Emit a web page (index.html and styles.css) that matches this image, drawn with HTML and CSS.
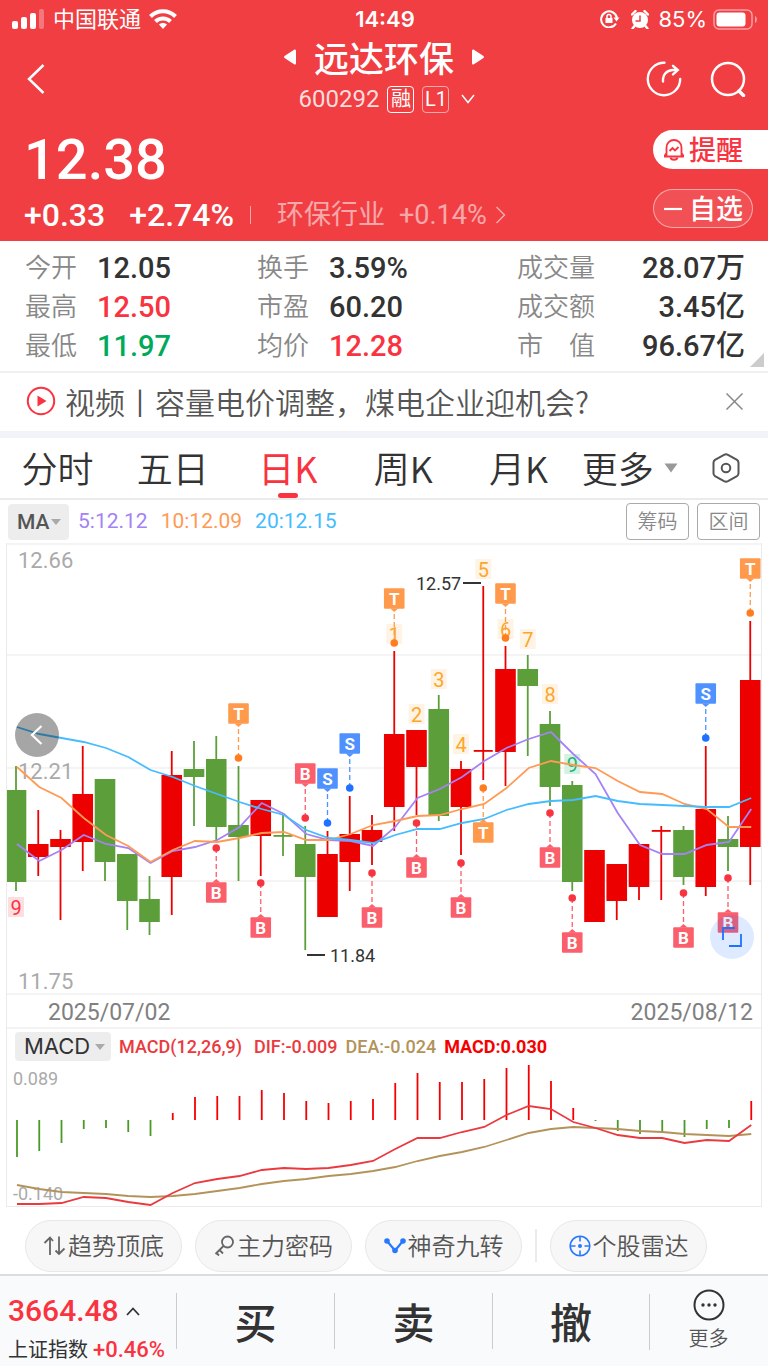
FILE: index.html
```
<!DOCTYPE html>
<html lang="zh">
<head>
    <meta charset="UTF-8">
    <meta name="viewport" content="width=device-width, initial-scale=1.0">
    <title>远达环保 600292</title>
    <link rel="stylesheet" href="styles.css">
</head>
<body>
    <header class="top">
        <div class="status">
            <div class="status-left">
                <svg width="33" height="20" viewBox="0 0 33 20" fill="#fff">
                    <rect x="0" y="12" width="6" height="8" rx="2"/>
                    <rect x="9" y="8" width="6" height="12" rx="2"/>
                    <rect x="18" y="4" width="6" height="16" rx="2"/>
                    <rect x="27" y="0" width="5" height="20" rx="2" opacity="0.3"/>
                </svg>
                <span>中国联通</span>
                <svg width="28" height="20" viewBox="0 0 28 20" fill="none" stroke="#fff" stroke-width="4">
                    <path d="M1.5 7.5C8.500 0.500 19.500 0.500 26.500 7.500"/>
                    <path d="M6.500 12.500C10.500 8.500 17.500 8.500 21.500 12.500"/>
                    <path d="M14 20l-4-4.500c2.200-2 5.800-2 8 0z" fill="#fff" stroke="none"/>
                </svg>
            </div>
            <span class="status-time">14:49</span>
            <div class="status-right">
                <svg width="20" height="18" viewBox="0 0 20 18" fill="none" stroke="#fff" stroke-width="2">
                    <path d="M16 13.500A8 8 0 1 1 17 8"/>
                    <path d="M13.500 7.500h6l-3 4z" fill="#fff" stroke="none"/>
                    <rect x="5.500" y="8" width="7" height="5" fill="#fff" stroke="none"/>
                    <path d="M7 8V6.500a2 2 0 0 1 4 0V8" stroke-width="1.500"/>
                </svg>
                <svg class="alarm" width="18" height="19" viewBox="0 0 18 19">
                    <circle cx="9" cy="10" r="8" fill="#fff"/>
                    <path d="M1 4.500L4.500 1M17 4.500L13.500 1M3.500 16l-2 2.500M14.500 16l2 2.500" stroke="#fff" stroke-width="2.400" stroke-linecap="round"/>
                    <path d="M9 5.500V11H4.500" fill="none" stroke="#f03e42" stroke-width="1.500"/>
                </svg>
                <span>85%</span>
                <svg width="45" height="21" viewBox="0 0 45 21" fill="none">
                    <rect x="1" y="1" width="38" height="19" rx="5" stroke="#fff" stroke-width="1.500" opacity="0.5"/>
                    <rect x="3.500" y="3.500" width="29" height="14" rx="3" fill="#fff"/>
                    <path d="M42 7c2.500 1 2.500 6 0 7z" fill="#fff" opacity="0.5"/>
                </svg>
            </div>
        </div>

        <nav class="nav">
            <button class="icon-btn back" aria-label="返回">
                <svg width="18" height="32" viewBox="0 0 18 32" fill="none" stroke="#fff" stroke-width="2.500">
                    <path d="M16.500 2L2 16l14.500 14"/>
                </svg>
            </button>
            <div class="stock">
                <div class="stock-name">
                    <button class="icon-btn" aria-label="上一只">
                        <svg width="12" height="16" viewBox="0 0 12 16" fill="#fff"><path d="M10.500 0.500Q12 0 12 2v12q0 2-1.500 1.500L0.500 9Q-0.300 8 0.500 7z"/></svg>
                    </button>
                    <h1>远达环保</h1>
                    <button class="icon-btn" aria-label="下一只">
                        <svg width="12" height="16" viewBox="0 0 12 16" fill="#fff"><path d="M1.500 0.500Q0 0 0 2v12q0 2 1.500 1.500L11.500 9q0.800-1 0-2z"/></svg>
                    </button>
                </div>
                <div class="stock-code">
                    <span>600292</span>
                    <span class="tag">融</span>
                    <span class="tag tag-dim">L1</span>
                    <svg width="14" height="10" viewBox="0 0 14 10" fill="none" stroke="#fff" stroke-width="1.500"><path d="M1 1l6 7.500L13 1"/></svg>
                </div>
            </div>
            <div class="nav-icons">
                <button class="icon-btn" aria-label="分享">
                    <svg width="36" height="36" viewBox="0 0 36 36" fill="none" stroke="#fff" stroke-width="2.400" stroke-linecap="round">
                        <path d="M18.500 1.800A16.200 16.200 0 1 0 34.200 18"/>
                        <path d="M17 20.500c-0.500-7 4-11.500 10-11.500h3.500"/>
                        <path d="M27 4.800l4.800 4.300-4.800 4.300"/>
                    </svg>
                </button>
                <button class="icon-btn" aria-label="搜索">
                    <svg width="36" height="36" viewBox="0 0 36 36" fill="none" stroke="#fff" stroke-width="2.500" stroke-linecap="round">
                        <circle cx="18" cy="18" r="16"/>
                        <path d="M29 30l4.500 4.500" stroke-width="3.500"/>
                    </svg>
                </button>
            </div>
        </nav>

        <div class="quote">
            <div class="quote-left">
                <div class="price">12.38</div>
                <div class="change">
                    <span>+0.33</span>
                    <span>+2.74%</span>
                    <a href="#" class="industry">
                        <span>环保行业</span>
                        <span>+0.14%</span>
                        <svg width="11" height="18" viewBox="0 0 11 18" fill="none" stroke="#fff" stroke-width="1.500"><path d="M1.500 1L9.500 9l-8 8"/></svg>
                    </a>
                </div>
            </div>
            <div class="quote-actions">
                <button class="alert-btn">
                    <svg width="22" height="24" viewBox="0 0 22 24" fill="none" stroke="#f9333f" stroke-width="1.800">
                        <path d="M1 18.500h20M3.500 18.500V9.500a7.500 7.500 0 0 1 15 0v9M1.500 18l2-3M20.500 18l-2-3"/>
                        <path d="M7.500 19.500c0.500 3 6.500 3 7 0"/>
                        <path d="M6.500 13l3-3 2.500 2.500 3.500-3.500"/>
                    </svg>
                    <span>提醒</span>
                </button>
                <button class="fav-btn">
                    <svg width="18" height="4" viewBox="0 0 18 4"><path d="M0 2h18" stroke="#fff" stroke-width="2.200"/></svg>
                    <span>自选</span>
                </button>
            </div>
        </div>
    </header>

    <section class="stats">
        <dl>
            <div><dt>今开</dt><dd>12.05</dd></div>
            <div><dt>最高</dt><dd class="up">12.50</dd></div>
            <div><dt>最低</dt><dd class="down">11.97</dd></div>
        </dl>
        <dl>
            <div><dt>换手</dt><dd>3.59%</dd></div>
            <div><dt>市盈</dt><dd>60.20</dd></div>
            <div><dt>均价</dt><dd class="up">12.28</dd></div>
        </dl>
        <dl class="wide">
            <div><dt>成交量</dt><dd>28.07万</dd></div>
            <div><dt>成交额</dt><dd>3.45亿</dd></div>
            <div><dt>市　值</dt><dd>96.67亿</dd></div>
        </dl>
    </section>

    <section class="news">
        <a href="#">
            <svg width="30" height="30" viewBox="0 0 30 30"><circle cx="15" cy="15" r="13.200" fill="none" stroke="#f9333f" stroke-width="2"/><path d="M11.500 9.500v11l9-5.500z" fill="#f9333f"/></svg>
            <span>视频丨容量电价调整，煤电企业迎机会?</span>
        </a>
        <button class="icon-btn" aria-label="关闭">
            <svg width="17" height="17" viewBox="0 0 17 17" stroke="#888" stroke-width="1.500"><path d="M0.500 0.500l16 16M16.500 0.500l-16 16"/></svg>
        </button>
    </section>

    <nav class="tabs">
        <button>分时</button>
        <button>五日</button>
        <button class="active">日K</button>
        <button>周K</button>
        <button>月K</button>
        <button>更多<svg width="14" height="10" viewBox="0 0 14 10"><path d="M0.500 0.500h13L7 9.500z" fill="#999"/></svg></button>
        <button aria-label="设置">
            <svg width="28" height="30" viewBox="0 0 28 30" fill="none" stroke="#555" stroke-width="2">
                <path d="M12 1.800q2-1 4 0l9 5q1.500 1 1.500 3v10.400q0 2-1.500 3l-9 5q-2 1-4 0l-9-5q-1.500-1-1.500-3V9.800q0-2 1.500-3z"/>
                <circle cx="14" cy="15" r="4.300"/>
            </svg>
        </button>
    </nav>

    <div class="ma-bar">
        <label class="picker picker-ma">
            <select aria-label="主图指标">
                <option>MA</option>
                <option>BOLL</option>
            </select>
            <svg width="10" height="6" viewBox="0 0 10 6"><path d="M0 0h10L5 6z" fill="#aaa"/></svg>
        </label>
        <span class="ma5">5:12.12</span>
        <span class="ma10">10:12.09</span>
        <span class="ma20">20:12.15</span>
        <div class="ma-actions">
            <button>筹码</button>
            <button>区间</button>
        </div>
    </div>

    <main class="charts">
        <div class="kline">
            <svg id="kline" viewBox="7 0 754 452" role="img" aria-label="日K线"></svg>
            <button class="round prev" aria-label="更早">
                <svg width="14" height="20" viewBox="0 0 14 20" fill="none" stroke="#fff" stroke-width="2.200"><path d="M11.500 1L2 10l9.500 9"/></svg>
            </button>
            <button class="round full" aria-label="全屏">
                <svg width="20" height="20" viewBox="0 0 20 20" fill="none" stroke="#1f72ff" stroke-width="1.800"><path d="M1 13V1h12M7 19h12V7"/></svg>
            </button>
        </div>
        <div class="dates">
            <time datetime="2025-07-02">2025/07/02</time>
            <time datetime="2025-08-12">2025/08/12</time>
        </div>
        <div class="macd-bar">
            <label class="picker picker-macd">
                <select aria-label="副图指标">
                    <option>MACD</option>
                    <option>KDJ</option>
                </select>
                <svg width="10" height="6" viewBox="0 0 10 6"><path d="M0 0h10L5 6z" fill="#aaa"/></svg>
            </label>
            <span class="dif name">MACD(12,26,9)</span>
            <span class="dif">DIF:-0.009</span>
            <span class="dea">DEA:-0.024</span>
            <span class="hist">MACD:0.030</span>
        </div>
        <svg id="macd" viewBox="7 0 754 144" role="img" aria-label="MACD"></svg>
    </main>

    <div class="tools">
        <button>
            <svg width="23" height="22" viewBox="0 0 23 22" fill="none" stroke="#666" stroke-width="1.800"><path d="M7 20V2.500M1.500 8L7 2.500 10 6M16 1.500V19M12.500 15.500L16 19l5.500-5.500"/></svg>
            <span>趋势顶底</span>
        </button>
        <button>
            <svg width="21" height="22" viewBox="0 0 21 22" fill="none" stroke="#666" stroke-width="1.800"><circle cx="13.500" cy="7" r="5.500"/><path d="M9.500 11L1.500 19M5.500 15l3.500 3.500M2.500 18l2.500 2.500"/></svg>
            <span>主力密码</span>
        </button>
        <button>
            <svg width="22" height="22" viewBox="0 0 22 22"><path d="M3 6l8 9.500L19 6" fill="none" stroke="#2878ff" stroke-width="2.200"/><g fill="#2878ff"><circle cx="3" cy="6" r="2.800"/><circle cx="11" cy="15.500" r="2.800"/><circle cx="19" cy="6" r="2.800"/></g></svg>
            <span>神奇九转</span>
        </button>
        <i class="tools-line"></i>
        <button>
            <svg width="22" height="22" viewBox="0 0 22 22" fill="none" stroke="#2878ff" stroke-width="1.600"><circle cx="11" cy="11" r="9.800"/><path d="M11 1v5.500M11 15.500V21M1 11h5.500M15.500 11H21"/><circle cx="11" cy="11" r="2" fill="#2878ff" stroke="none"/></svg>
            <span>个股雷达</span>
        </button>
    </div>

    <footer class="bottom">
        <a href="#" class="index">
            <span class="index-value">3664.48
                <svg width="14" height="9" viewBox="0 0 14 9" fill="none" stroke="#333" stroke-width="1.800"><path d="M1 8l6-6.500L13 8"/></svg>
            </span>
            <span class="index-name">上证指数 <b>+0.46%</b></span>
        </a>
        <button class="trade">买</button>
        <button class="trade">卖</button>
        <button class="trade">撤</button>
        <button class="more">
            <svg width="32" height="32" viewBox="0 0 32 32"><circle cx="16" cy="16" r="14.500" fill="none" stroke="#333" stroke-width="2"/><g fill="#333"><circle cx="10" cy="16" r="1.700"/><circle cx="16" cy="16" r="1.700"/><circle cx="22" cy="16" r="1.700"/></g></svg>
            <span>更多</span>
        </button>
    </footer>

    <script>
        const NS = 'http://www.w3.org/2000/svg';
        const RED = '#ec0000';
        const GREEN = '#5c9f3a';
        const STEP = 22.25;

        // [涨=1 跌=0, 最高, 实体上沿, 实体下沿, 最低]
        const candles = [
            [0, 223, 247, 339, 348], [1, 267, 301, 314, 333], [1, 287, 296, 304, 377], [1, 203, 251, 299, 328],
            [0, 236, 236, 319, 338], [0, 311, 311, 358, 387], [0, 333, 356, 379, 392], [1, 208, 232, 334, 372],
            [0, 198, 226, 234, 283], [0, 193, 216, 284, 298], [0, 223, 282, 294, 338], [1, 257, 257, 293, 333],
            [0, 272, 292, 293, 313], [0, 283, 301, 334, 407], [1, 288, 311, 374, 374], [1, 253, 291, 319, 348],
            [1, 272, 287, 299, 322], [1, 108, 191, 264, 288], [1, 187, 187, 224, 272], [0, 152, 166, 273, 278],
            [1, 218, 226, 264, 312], [1, 43, 207, 208, 237], [1, 103, 126, 209, 243], [0, 112, 126, 143, 213],
            [0, 168, 181, 244, 263], [0, 238, 242, 339, 348], [1, 307, 307, 379, 379], [1, 321, 321, 358, 377],
            [1, 301, 301, 344, 357], [1, 283, 287, 288, 357], [0, 283, 287, 334, 342], [1, 203, 266, 344, 353],
            [0, 273, 296, 304, 328], [1, 78, 137, 304, 342]
        ];
        const ma5 = [301, 318, 307, 292, 301, 305, 320, 308, 304, 297, 284, 260, 271, 291, 297, 298, 303, 284, 255, 246, 234, 218, 205, 196, 189, 211, 231, 270, 302, 311, 311, 302, 299, 266];
        const ma10 = [224, 244, 255, 275, 292, 303, 319, 307, 298, 299, 295, 290, 289, 297, 297, 291, 282, 278, 273, 272, 266, 261, 245, 225, 218, 222, 225, 238, 249, 251, 261, 266, 284, 284];
        const ma20 = [184, 191, 195, 199, 205, 214, 227, 234, 243, 251, 259, 266, 272, 287, 295, 297, 300, 292, 286, 286, 280, 276, 267, 261, 258, 257, 253, 258, 261, 262, 263, 264, 264, 255];

        // [第几根, 字母, 方向(-1上 1下), 圆点位置]
        const signals = [
            [9, 'B', 1, 305], [10, 'T', -1, 215], [11, 'B', 1, 340], [13, 'B', -1, 275], [14, 'S', -1, 280],
            [15, 'S', -1, 245], [16, 'B', 1, 330], [17, 'T', -1, 100], [18, 'B', 1, 280], [20, 'B', 1, 320],
            [21, 'T', 1, 245], [22, 'T', -1, 95], [24, 'B', 1, 270], [25, 'B', 1, 355], [30, 'B', 1, 350],
            [31, 'S', -1, 195], [32, 'B', 1, 335], [33, 'T', -1, 70]
        ];
        const signalColors = {
            B: ['#fb5f6b', '#f9333f'],
            T: ['#ff9a4d', '#ff7d1f'],
            S: ['#4f92ff', '#1f72ff']
        };

        // 神奇九转 [第几根, 数字, 中心, 文字色, 底色]
        const counts = [
            [0, 9, 364, '#f9333f', '#fddfe1'], [17, 1, 91, '#fba828', '#fff3e6'], [18, 2, 171, '#fba828', '#fff3e6'],
            [19, 3, 136, '#fba828', '#fff3e6'], [20, 4, 201, '#fba828', '#fff3e6'], [21, 5, 26, '#fba828', '#fff3e6'],
            [22, 6, 86, '#fba828', '#fff3e6'], [23, 7, 96, '#fba828', '#fff3e6'], [24, 8, 151, '#fba828', '#fff3e6'],
            [25, 9, 221, '#1fb573', '#d5f1e4']
        ];

        const hist = [95, 89, 81, 67, 66, 70, 74, 51, 35, 34, 34, 28, 31, 39, 41, 39, 37, 21, 11, 20, 20, 17, 6, 3, 19, 46, 59, 69, 72, 70, 75, 67, 66, 39];
        const dif = [142, 142, 141, 135, 136, 140, 143, 131, 121, 117, 114, 108, 106, 107, 106, 103, 99, 87, 76, 76, 70, 65, 53, 44, 47, 60, 66, 73, 76, 76, 81, 78, 79, 63];
        const dea = [123, 127, 130, 131, 132, 134, 135, 134, 132, 129, 126, 122, 119, 117, 114, 112, 109, 105, 99, 94, 90, 85, 78, 71, 67, 65, 66, 67, 69, 70, 72, 73, 74, 72];

        function add(svg, tag, attrs, text) {
            const el = document.createElementNS(NS, tag);
            for (const key in attrs) {
                el.setAttribute(key, attrs[key]);
            }
            if (text !== undefined) {
                el.textContent = text;
            }
            svg.appendChild(el);
            return el;
        }

        function drawLine(svg, values, color) {
            const points = values.map((y, i) => (17 + i * STEP) + ',' + y).join(' ');
            add(svg, 'polyline', { points: points, fill: 'none', stroke: color, 'stroke-width': 1.8 });
        }

        function drawKline() {
            const svg = document.getElementById('kline');
            [1, 112, 225, 338, 451].forEach(y => {
                add(svg, 'path', { d: 'M7 ' + y + 'H761', stroke: '#f0f0f0', 'stroke-width': 1.5 });
            });
            add(svg, 'text', { x: 18, y: 25, class: 'axis' }, '12.66');
            add(svg, 'text', { x: 18, y: 236, class: 'axis' }, '12.21');
            add(svg, 'text', { x: 18, y: 446, class: 'axis' }, '11.75');

            counts.forEach(([i, n, y, color, bg]) => {
                const x = 16 + i * STEP;
                add(svg, 'rect', { x: x - 8, y: y - 10, width: 16, height: 20, fill: bg });
                add(svg, 'text', { x: x, y: y + 8, fill: color, class: 'count' }, n);
            });

            candles.forEach(([up, high, top, bottom, low], i) => {
                const x = 16 + i * STEP;
                const color = up ? RED : GREEN;
                const half = bottom - top < 2 ? 9.5 : 10.3;
                add(svg, 'path', { d: 'M' + x + ' ' + high + 'V' + low, stroke: color, 'stroke-width': 1.8 });
                add(svg, 'rect', { x: x - half, y: top, width: half * 2, height: Math.max(bottom - top, 1.8), fill: color });
            });

            drawLine(svg, ma5, '#a582f5');
            drawLine(svg, ma10, '#ff9a55');
            drawLine(svg, ma20, '#45bcff');

            signals.forEach(([i, letter, dir, y]) => {
                const x = 16 + i * STEP;
                const [fill, dot] = signalColors[letter];
                const c = y + dir * 44.5;
                const edge = c - dir * 10;
                add(svg, 'path', { d: 'M' + x + ' ' + y + 'V' + edge, stroke: fill, 'stroke-width': 1.3, 'stroke-dasharray': '5 3' });
                add(svg, 'circle', { cx: x, cy: y, r: 3.8, fill: dot });
                add(svg, 'rect', { x: x - 10.3, y: c - 10.3, width: 20.6, height: 20.6, rx: 1, fill: fill });
                add(svg, 'path', { d: 'M' + (x - 4) + ' ' + edge + 'h8l-4 ' + (-dir * 3.5) + 'z', fill: fill });
                add(svg, 'text', { x: x, y: c + 6, class: 'signal' }, letter);
            });

            add(svg, 'path', { d: 'M463 40h18M307 412h18', stroke: '#333', 'stroke-width': 2 });
            add(svg, 'text', { x: 416, y: 47, class: 'extreme' }, '12.57');
            add(svg, 'text', { x: 330, y: 419, class: 'extreme' }, '11.84');
        }

        function drawMacd() {
            const svg = document.getElementById('macd');
            const zero = 58;
            add(svg, 'text', { x: 13, y: 23, class: 'axis-small' }, '0.089');
            add(svg, 'text', { x: 13, y: 138, class: 'axis-small' }, '-0.140');
            hist.forEach((y, i) => {
                const x = 17 + i * STEP;
                add(svg, 'path', { d: 'M' + x + ' ' + zero + 'V' + y, stroke: y < zero ? '#f50000' : '#4a9a28', 'stroke-width': 1.8 });
            });
            drawLine(svg, dea, '#b3935a');
            drawLine(svg, dif, '#ea3a40');
        }

        drawKline();
        drawMacd();
    </script>
</body>
</html>
```
FILE: styles.css
```
* {
    box-sizing: border-box;
}

body {
    margin: 0;
    background: #fff;
    color: #333;
    font-family: Roboto, "Noto Sans CJK SC", sans-serif;
    line-height: 1.2;
}

button {
    padding: 0;
    border: none;
    background: none;
    color: inherit;
    font: inherit;
    cursor: pointer;
}

a {
    color: inherit;
    text-decoration: none;
}

svg {
    display: block;
    flex: none;
}

/* 以中文为主的文字 */
h1,
.quote-actions,
.news,
.tabs,
.tools,
.trade {
    font-family: "Noto Sans CJK SC", sans-serif;
}

.icon-btn {
    display: flex;
}

/* 顶部 */
.top {
    background: #f03e42;
    color: #fff;
}

.status {
    display: grid;
    grid-template-columns: 1fr auto 1fr;
    align-items: center;
    height: 36px;
    padding: 2px 10px 0 12px;
    font-family: Inter, "Noto Sans CJK SC", sans-serif;
    font-size: 22px;
    line-height: 30px;
}

.status-left,
.status-right {
    display: flex;
    align-items: center;
    gap: 8px;
}

.status-right {
    justify-content: flex-end;
    gap: 6px;
}

.alarm {
    margin: 0 3px 0 5px;
}

.status-time {
    font-weight: 600;
}

.nav {
    display: grid;
    grid-template-columns: 1fr auto 1fr;
    align-items: center;
    height: 86px;
    padding: 0 22px;
}

.back {
    padding-left: 5px;
}

.stock {
    align-self: start;
}

.stock-name {
    display: flex;
    align-items: center;
    justify-content: center;
    gap: 18px;
    height: 42px;
}

.stock-name h1 {
    margin: 0;
    font-size: 35px;
    font-weight: 500;
    line-height: 42px;
}

.stock-code {
    display: flex;
    align-items: center;
    justify-content: center;
    gap: 8px;
    height: 30px;
    margin-top: 6px;
    padding-left: 6px;
    font-size: 24px;
    color: #fddcdd;
}

.tag {
    width: 27px;
    height: 27px;
    border: 1px solid #fff;
    border-radius: 4px;
    font-size: 20px;
    line-height: 25px;
    text-align: center;
    color: #fff;
}

.tag-dim {
    border-color: #f9a9ab;
}

.stock-code svg {
    margin-left: 4px;
}

.nav-icons {
    display: flex;
    justify-content: flex-end;
    gap: 28px;
}

.quote {
    display: flex;
    justify-content: space-between;
    padding: 8px 0 13px 24px;
}

.price {
    font-size: 56px;
    font-weight: 500;
    line-height: 60px;
}

.change {
    display: flex;
    align-items: center;
    gap: 24px;
    height: 26px;
    margin-top: 12px;
    font-size: 32px;
    font-weight: 500;
    white-space: nowrap;
}

.industry {
    display: flex;
    align-items: center;
    gap: 14px;
    font-size: 27px;
    font-weight: 400;
    opacity: 0.55;
}

.industry::before {
    content: "";
    width: 1px;
    height: 18px;
    margin: 0 12px 0 -8px;
    background: #fff;
}

.industry svg {
    margin-left: -6px;
}

.quote-actions {
    display: flex;
    flex-direction: column;
    gap: 20px;
    width: 115px;
}

.alert-btn,
.fav-btn {
    display: flex;
    align-items: center;
    height: 39px;
    font-size: 27px;
    font-weight: 500;
}

.alert-btn {
    gap: 4px;
    padding-left: 10px;
    border-radius: 20px 0 0 20px;
    background: #fff;
    color: #f9333f;
}

.fav-btn {
    gap: 7px;
    width: 100px;
    padding-left: 10px;
    border: 1px solid rgba(255, 255, 255, 0.5);
    border-radius: 20px;
    background: rgba(255, 255, 255, 0.1);
}

/* 行情数据 */
.stats {
    position: relative;
    display: grid;
    grid-template-columns: 232fr 260fr 228fr;
    padding: 8px 23px 5px 25px;
    border-bottom: 2px solid #f0f0f0;
}

.stats::after {
    content: "";
    position: absolute;
    right: 4px;
    bottom: 4px;
    border-left: 14px solid transparent;
    border-bottom: 14px solid #ccc;
}

.stats dl {
    margin: 0;
}

.stats dl div {
    display: flex;
    align-items: center;
    gap: 20px;
    height: 39px;
}

.stats .wide div {
    justify-content: space-between;
}

.stats dt {
    font-size: 26px;
    font-weight: 350;
    color: #888;
}

.stats dd {
    margin: 0;
    font-size: 29px;
    font-weight: 500;
}

.stats .up {
    color: #f9333f;
}

.stats .down {
    color: #00aa5b;
}

.news {
    display: flex;
    align-items: center;
    justify-content: space-between;
    height: 58px;
    padding: 0 25px 2px 26px;
}

.news a {
    display: flex;
    align-items: center;
    gap: 9px;
    font-size: 30px;
    font-weight: 350;
    color: #555;
    white-space: nowrap;
}

.tabs {
    display: grid;
    grid-template-columns: repeat(5, 15fr) 14fr 11fr;
    height: 69px;
    border-top: 7px solid #f1f3f8;
    border-bottom: 2px solid #ebebeb;
}

.tabs button {
    position: relative;
    display: flex;
    align-items: center;
    justify-content: center;
    gap: 10px;
    font-size: 36px;
    white-space: nowrap;
    font-weight: 350;
}

.tabs .active {
    color: #f9333f;
    font-weight: 400;
}

.tabs .active::after {
    content: "";
    position: absolute;
    bottom: 0;
    left: 50%;
    width: 20px;
    height: 5px;
    margin-left: -10px;
    border-radius: 3px;
    background: #f9333f;
}

/* 指标选择 */
.picker {
    position: relative;
    display: block;
}

.picker select {
    display: block;
    width: 100%;
    border: none;
    border-radius: 4px;
    background: #ededed;
    color: #555;
    font-family: inherit;
    appearance: none;
}

.picker svg {
    position: absolute;
    top: 50%;
    margin-top: -3px;
    pointer-events: none;
}

.picker-ma {
    width: 61px;
    margin-right: -4px;
}

.picker-ma select {
    height: 36px;
    padding: 0 0 0 9px;
    font-size: 21px;
    font-weight: 500;
}

.picker-ma svg {
    right: 8px;
}

.picker-macd {
    width: 96px;
}

.picker-macd select {
    height: 29px;
    padding: 0 0 0 9px;
    font-family: Inter, sans-serif;
    font-size: 22px;
    line-height: 29px;
    color: #333;
}

.picker-macd svg {
    right: 6px;
}

.ma-bar {
    display: flex;
    align-items: center;
    gap: 13px;
    height: 43px;
    padding: 0 8px;
    font-size: 21px;
}

.ma5 {
    color: #a582f5;
}

.ma10 {
    color: #ff9a55;
}

.ma20 {
    color: #45bcff;
}

.ma-actions {
    display: flex;
    gap: 8px;
    margin-left: auto;
}

.ma-actions button {
    width: 63px;
    height: 37px;
    border: 1px solid #aaa;
    border-radius: 4px;
    font-size: 20px;
    font-weight: 350;
    color: #888;
}

/* 图表 */
.charts {
    margin: 0 6px;
    border: 1px solid #ebebeb;
    border-top: none;
}

.kline {
    position: relative;
}

.charts > svg,
.kline > svg {
    width: 100%;
}

.axis {
    font-size: 22px;
    fill: #aaa;
}

.axis-small {
    font-size: 18px;
    fill: #aaa;
}

.extreme {
    font-size: 18px;
    fill: #333;
}

.count {
    font-size: 20px;
    text-anchor: middle;
}

.signal {
    font-size: 17px;
    font-weight: 700;
    fill: #fff;
    text-anchor: middle;
}

.round {
    position: absolute;
    display: flex;
    align-items: center;
    justify-content: center;
    width: 44px;
    height: 44px;
    border-radius: 50%;
}

.prev {
    left: 8px;
    top: 37.5%;
    background: rgba(0, 0, 0, 0.35);
}

.full {
    right: 7px;
    bottom: 8%;
    background: rgba(31, 114, 255, 0.15);
}

.dates {
    display: flex;
    align-items: center;
    justify-content: space-between;
    height: 34px;
    padding: 4px 8px 0 41px;
    border-bottom: 2px solid #f3f3f3;
    font-size: 23px;
    color: #808080;
}

.macd-bar {
    display: flex;
    align-items: center;
    gap: 8px;
    height: 33px;
    padding: 2px 0 0 8px;
    font-size: 18px;
    font-weight: 500;
}

.dif {
    color: #ea3a40;
}

.macd-bar .name {
    margin-right: 4px;
}

.dea {
    color: #b3935a;
}

.hist {
    font-weight: 700;
    color: #f50000;
}

.tools {
    display: flex;
    align-items: center;
    gap: 13px;
    height: 67px;
    padding: 10px 25px 0;
}

.tools button {
    display: flex;
    align-items: center;
    justify-content: center;
    flex: 0 1 157px;
    gap: 2px;
    height: 52px;
    border: 1px solid #e8e8e8;
    border-radius: 26px;
    background: #f7f7f7;
    font-size: 24px;
    font-weight: 350;
    color: #555;
    white-space: nowrap;
}

.tools-line {
    width: 2px;
    height: 33px;
    background: #ebebeb;
}

/* 底部 */
.bottom {
    display: grid;
    grid-template-columns: 176fr 158fr 158fr 157fr 119fr;
    align-items: center;
    height: 92px;
    border-top: 2px solid #dcdde0;
    background: #f9fafc;
}

.index {
    display: flex;
    flex-direction: column;
    gap: 6px;
    padding: 16px 0 0 8px;
    white-space: nowrap;
}

.index-value {
    display: flex;
    align-items: center;
    gap: 7px;
    font-size: 30px;
    font-weight: 500;
    line-height: 36px;
    color: #f9333f;
}

.index-name {
    font-size: 20px;
    line-height: 30px;
}

.index-name b {
    font-size: 22px;
    font-weight: 500;
    color: #f9333f;
}

.trade {
    height: 56px;
    border-left: 1px solid #ccc;
    font-size: 42px;
    font-weight: 500;
    line-height: 56px;
}

.more {
    position: relative;
    display: flex;
    flex-direction: column;
    align-items: center;
    gap: 3px;
    font-size: 20px;
    font-weight: 350;
    line-height: 30px;
    color: #555;
}

.more::before {
    content: "";
    position: absolute;
    left: 0;
    top: 5px;
    width: 1px;
    height: 56px;
    background: #ccc;
}
```
